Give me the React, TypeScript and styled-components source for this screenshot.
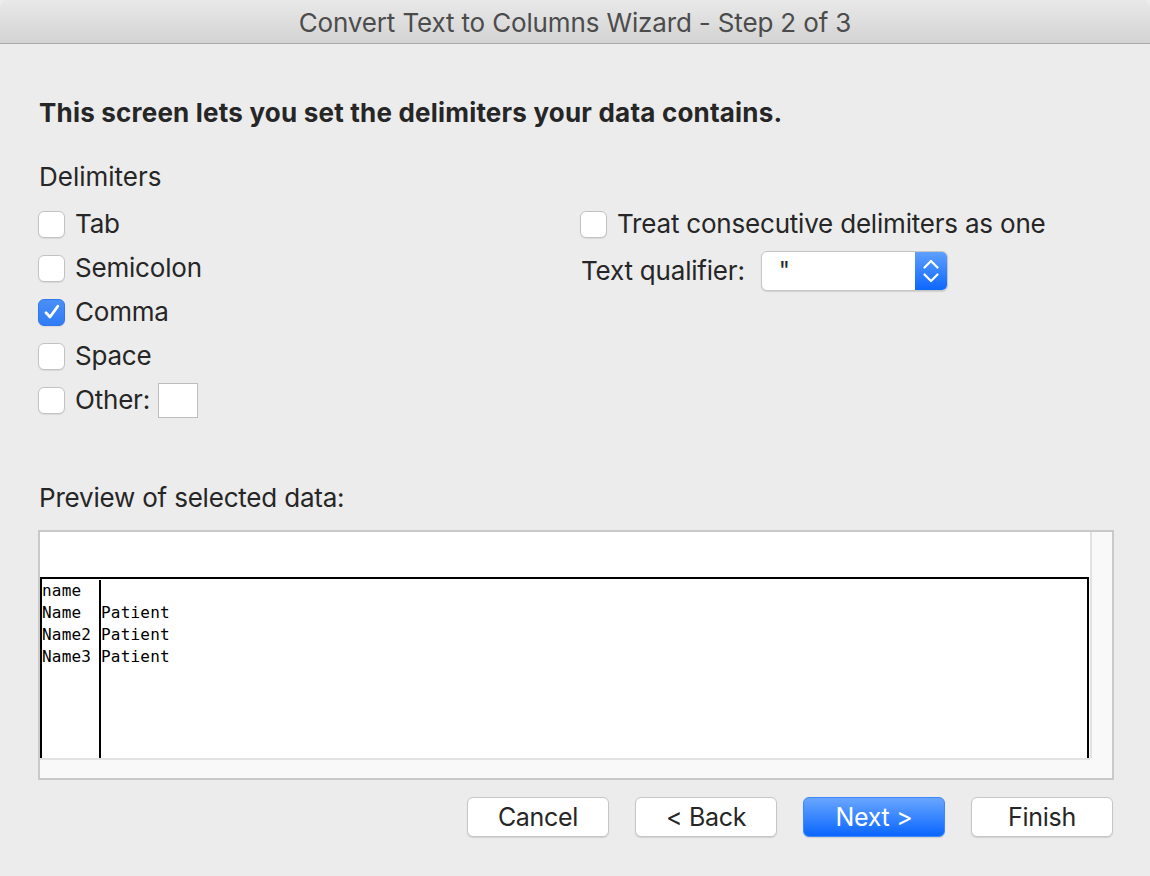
import React from "react";
import styled, { createGlobalStyle } from "styled-components";

const GlobalStyle = createGlobalStyle`
  html, body {
    margin: 0;
    padding: 0;
    background: #ececec;
  }
  * {
    box-sizing: border-box;
  }
`;

const delimiters = [
  { label: "Tab", checked: false },
  { label: "Semicolon", checked: false },
  { label: "Comma", checked: true },
  { label: "Space", checked: false },
];

const previewRows = [
  ["name", ""],
  ["Name", "Patient"],
  ["Name2", "Patient"],
  ["Name3", "Patient"],
];

const Check = ({ checked }: { checked?: boolean }) => (
  <CheckBox $checked={checked}>
    {checked && (
      <svg width="20" height="20" viewBox="0 0 20 20">
        <path
          d="M4 10.8 L8 15 L15.8 4.2"
          fill="none"
          stroke="#fff"
          strokeWidth="2.8"
          strokeLinecap="round"
          strokeLinejoin="round"
        />
      </svg>
    )}
  </CheckBox>
);

const App = () => {
  return (
    <Window>
      <GlobalStyle />
      <TitleBar>Convert Text to Columns Wizard - Step 2 of 3</TitleBar>
      <Content>
        <Heading>This screen lets you set the delimiters your data contains.</Heading>
        <SectionLabel>Delimiters</SectionLabel>
        <Columns>
          <Column>
            {delimiters.map((d) => (
              <OptionRow key={d.label}>
                <Check checked={d.checked} />
                <Label>{d.label}</Label>
              </OptionRow>
            ))}
            <OptionRow>
              <Check />
              <Label>Other:</Label>
              <OtherInput />
            </OptionRow>
          </Column>
          <Column>
            <OptionRow>
              <Check />
              <Label>Treat consecutive delimiters as one</Label>
            </OptionRow>
            <QualifierRow>
              <Label>Text qualifier:</Label>
              <Select>
                <SelectValue>"</SelectValue>
                <SelectArrows>
                  <svg width="18" height="28" viewBox="0 0 18 28">
                    <path
                      d="M2.5 10.5 L9 4 L15.5 10.5 M2.5 17.5 L9 24 L15.5 17.5"
                      fill="none"
                      stroke="#fff"
                      strokeWidth="2.2"
                      strokeLinecap="round"
                      strokeLinejoin="round"
                    />
                  </svg>
                </SelectArrows>
              </Select>
            </QualifierRow>
          </Column>
        </Columns>
        <PreviewLabel>Preview of selected data:</PreviewLabel>
        <PreviewBox>
          <PreviewArea>
            <PreviewHeader />
            <PreviewTable>
              <DataColumn>
                {previewRows.map((r, i) => (
                  <Cell key={i}>{r[0]}</Cell>
                ))}
              </DataColumn>
              <DataColumn $last>
                {previewRows.map((r, i) => (
                  <Cell key={i}>{r[1]}</Cell>
                ))}
              </DataColumn>
            </PreviewTable>
          </PreviewArea>
          <VScroll />
          <HScroll />
          <Corner />
        </PreviewBox>
        <ButtonRow>
          <Button>Cancel</Button>
          <Button>&lt; Back</Button>
          <Button $primary>Next &gt;</Button>
          <Button>Finish</Button>
        </ButtonRow>
      </Content>
    </Window>
  );
};

const Window = styled.div`
  width: 1150px;
  height: 876px;
  display: flex;
  flex-direction: column;
  background: #ececec;
  font-family: Inter, "Liberation Sans", sans-serif;
  color: #262626;
  overflow: hidden;
`;

const TitleBar = styled.div`
  height: 44px;
  flex-shrink: 0;
  display: flex;
  align-items: center;
  justify-content: center;
  background: linear-gradient(#e9e9e9, #d3d3d3);
  border-bottom: 1px solid #ababab;
  border-radius: 8px 8px 0 0;
  font-size: 26px;
  letter-spacing: -0.15px;
  color: #4c4c4c;
  padding-top: 1px;
`;

const Content = styled.div`
  padding: 54px 36px 0 38px;
  display: flex;
  flex-direction: column;
`;

const Heading = styled.div`
  font-size: 26px;
  font-weight: 700;
  line-height: 30px;
  letter-spacing: 0.2px;
  padding-left: 1px;
`;

const SectionLabel = styled.div`
  font-size: 26px;
  line-height: 30px;
  margin-top: 34px;
  padding-left: 1px;
`;

const Columns = styled.div`
  display: grid;
  grid-template-columns: 542px 1fr;
  margin-top: 10px;
`;

const Column = styled.div`
  display: flex;
  flex-direction: column;
`;

const OptionRow = styled.div`
  height: 44px;
  display: flex;
  align-items: center;
  gap: 10px;
`;

const CheckBox = styled.div<{ $checked?: boolean }>`
  width: 27px;
  height: 27px;
  flex-shrink: 0;
  border-radius: 6px;
  display: flex;
  align-items: center;
  justify-content: center;
  background: ${(p) => (p.$checked ? "linear-gradient(#4a8ff9, #2f7cf6)" : "#fff")};
  border: 1px solid ${(p) => (p.$checked ? "#2f78ef" : "#c2c2c2")};
  box-shadow: 0 1px 1px rgba(0, 0, 0, 0.08);
`;

const Label = styled.span`
  font-size: 26px;
  line-height: 30px;
  letter-spacing: -0.2px;
  white-space: nowrap;
`;

const OtherInput = styled.div`
  width: 40px;
  height: 35px;
  background: #fff;
  border: 1px solid #bdbdbd;
  margin-left: -2px;
`;

const QualifierRow = styled.div`
  height: 40px;
  margin-top: 5px;
  display: flex;
  align-items: center;
  gap: 16px;
  padding-left: 1px;
`;

const Select = styled.div`
  width: 187px;
  height: 40px;
  display: flex;
  background: #fff;
  border: 1px solid #c6c6c6;
  border-radius: 6px;
  box-shadow: 0 1px 1px rgba(0, 0, 0, 0.12);
  overflow: hidden;
`;

const SelectValue = styled.div`
  flex: 1;
  font-size: 24px;
  line-height: 38px;
  padding-left: 17px;
`;

const SelectArrows = styled.div`
  width: 32px;
  display: flex;
  align-items: center;
  justify-content: center;
  background: linear-gradient(#5e9fff, #0d67fe);
`;

const PreviewLabel = styled.div`
  font-size: 26px;
  line-height: 30px;
  letter-spacing: -0.2px;
  margin-top: 61px;
  padding-left: 1px;
`;

const PreviewBox = styled.div`
  margin-top: 17px;
  width: 1076px;
  height: 250px;
  border: 2px solid #c9c9c9;
  display: grid;
  grid-template-columns: 1fr 22px;
  grid-template-rows: 1fr 20px;
  background: #fff;
`;

const PreviewArea = styled.div`
  display: flex;
  flex-direction: column;
  background: #fff;
  min-height: 0;
`;

const PreviewHeader = styled.div`
  height: 45px;
  flex-shrink: 0;
`;

const PreviewTable = styled.div`
  flex: 1;
  display: flex;
  border-top: 2px solid #000;
  border-left: 2px solid #000;
  border-right: 2px solid #000;
  margin-right: 1px;
  padding-top: 1px;
`;

const DataColumn = styled.div<{ $last?: boolean }>`
  width: ${(p) => (p.$last ? "auto" : "59px")};
  flex: ${(p) => (p.$last ? "1" : "none")};
  border-right: ${(p) => (p.$last ? "none" : "2px solid #000")};
  display: flex;
  flex-direction: column;
`;

const Cell = styled.div`
  height: 22px;
  line-height: 22px;
  font-family: "DejaVu Sans Mono", "Liberation Mono", monospace;
  font-size: 16px;
  color: #000;
  white-space: pre;
  letter-spacing: 0.2px;
`;

const VScroll = styled.div`
  background: #f9f9f9;
  border-left: 2px solid #e2e2e2;
`;

const HScroll = styled.div`
  background: #f9f9f9;
  border-top: 2px solid #e2e2e2;
`;

const Corner = styled.div`
  background: #f9f9f9;
`;

const ButtonRow = styled.div`
  margin-top: 17px;
  display: flex;
  justify-content: flex-end;
  gap: 26px;
  padding-right: 1px;
`;

const Button = styled.button<{ $primary?: boolean }>`
  width: 142px;
  height: 40px;
  border-radius: 6px;
  font-family: Inter, "Liberation Sans", sans-serif;
  font-size: 25px;
  letter-spacing: -0.3px;
  color: ${(p) => (p.$primary ? "#fff" : "#262626")};
  background: ${(p) => (p.$primary ? "linear-gradient(#69a6ff, #0a66ff)" : "#fff")};
  border: 1px solid ${(p) => (p.$primary ? "#3f87fb" : "#c6c6c6")};
  box-shadow: 0 1px 1px rgba(0, 0, 0, 0.12);
  cursor: pointer;
  padding: 0;
`;

export default App;
